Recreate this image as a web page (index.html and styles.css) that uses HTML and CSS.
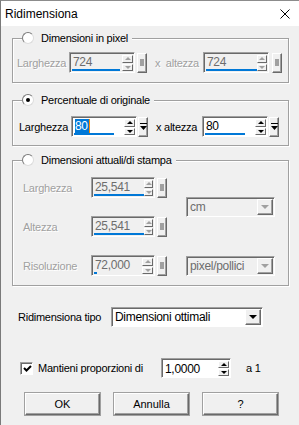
FILE: index.html
```html
<html lang="it">

<head>
    <meta charset="UTF-8">
    <title>Ridimensiona</title>
    <link rel="stylesheet" href="styles.css">
</head>

<body>
    <div class="window">
        <!-- Title bar -->
        <div class="titlebar">
            <span>Ridimensiona</span>
            <svg class="close" width="10" height="10" viewBox="0 0 10 10">
                <path d="M0.5 0.5 L9.5 9.5 M9.5 0.5 L0.5 9.5" stroke="#000" stroke-width="1" fill="none"/>
            </svg>
        </div>

        <div class="content">
            <!-- Dimensioni in pixel -->
            <div class="group g1">
                <div class="legend"><span class="radio"></span><span>Dimensioni in pixel</span></div>
                <div class="row">
                    <span class="lbl off w52">Larghezza</span>
                    <div class="spin off">
                        <div class="field"><span class="val">724</span><i class="bar" style="width:48px"></i></div>
                        <div class="arrows"><span class="ab up"></span><span class="ab down"></span></div>
                    </div>
                    <span class="sqbtn m2"><span class="sq"></span></span>
                    <span class="lbl off x-lbl">x &nbsp;altezza</span>
                    <div class="spin off">
                        <div class="field"><span class="val">724</span><i class="bar" style="width:51px"></i></div>
                        <div class="arrows"><span class="ab up"></span><span class="ab down"></span></div>
                    </div>
                    <span class="sqbtn m3"><span class="sq"></span></span>
                </div>
            </div>

            <!-- Percentuale di originale -->
            <div class="group g2">
                <div class="legend"><span class="radio on"></span><span>Percentuale di originale</span></div>
                <div class="row">
                    <span class="lbl w52">Larghezza</span>
                    <div class="spin white">
                        <div class="field"><span class="val"><span class="sel">80</span><span class="caret"></span></span><i class="bar" style="width:40px"></i></div>
                        <div class="arrows"><span class="ab up"></span><span class="ab down"></span></div>
                    </div>
                    <span class="sqbtn m1">
                        <svg width="7" height="7" viewBox="0 0 7 7"><rect x="0" y="0" width="7" height="1" fill="#000"/><polygon points="0,3 7,3 3.5,7" fill="#000"/></svg>
                    </span>
                    <span class="lbl x-lbl2">x altezza</span>
                    <div class="spin white">
                        <div class="field"><span class="val">80</span><i class="bar" style="width:40px"></i></div>
                        <div class="arrows"><span class="ab up"></span><span class="ab down"></span></div>
                    </div>
                    <span class="sqbtn m1">
                        <svg width="7" height="7" viewBox="0 0 7 7"><rect x="0" y="0" width="7" height="1" fill="#000"/><polygon points="0,3 7,3 3.5,7" fill="#000"/></svg>
                    </span>
                </div>
            </div>

            <!-- Dimensioni attuali/di stampa -->
            <div class="group g3">
                <div class="legend"><span class="radio"></span><span>Dimensioni attuali/di stampa</span></div>
                <div class="grid">
                    <span class="lbl off">Larghezza</span>
                    <div class="pair">
                        <div class="spin off narrow">
                            <div class="field"><span class="val">25,541</span><i class="bar" style="width:50px"></i></div>
                            <div class="arrows"><span class="ab up"></span><span class="ab down"></span></div>
                        </div>
                        <span class="sqbtn m2"><span class="sq"></span></span>
                    </div>
                    <div class="select off unit"><span class="text">cm</span><span class="dbtn"></span></div>

                    <span class="lbl off">Altezza</span>
                    <div class="pair">
                        <div class="spin off narrow">
                            <div class="field"><span class="val">25,541</span><i class="bar" style="width:50px"></i></div>
                            <div class="arrows"><span class="ab up"></span><span class="ab down"></span></div>
                        </div>
                        <span class="sqbtn m2"><span class="sq"></span></span>
                    </div>

                    <span class="lbl off">Risoluzione</span>
                    <div class="pair">
                        <div class="spin off narrow">
                            <div class="field"><span class="val">72,000</span><i class="bar" style="width:3px"></i></div>
                            <div class="arrows"><span class="ab up"></span><span class="ab down"></span></div>
                        </div>
                        <span class="sqbtn m2"><span class="sq"></span></span>
                    </div>
                    <div class="select off res"><span class="text">pixel/pollici</span><span class="dbtn"></span></div>
                </div>
            </div>

            <!-- Ridimensiona tipo -->
            <div class="tipo">
                <span class="lbl tipo-lbl">Ridimensiona tipo</span>
                <div class="select tipo-sel"><span class="text">Dimensioni ottimali</span><span class="dbtn"></span></div>
            </div>

            <!-- Mantieni proporzioni -->
            <div class="keep">
                <span class="check">
                    <svg width="9" height="9" viewBox="0 0 9 9"><path d="M1 4 L3.5 6.5 L8 2" stroke="#000" stroke-width="2" fill="none"/></svg>
                </span>
                <span class="lbl keep-lbl">Mantieni proporzioni di</span>
                <div class="spin white ratio">
                    <div class="field"><span class="val">1,0000</span></div>
                    <div class="arrows"><span class="ab up"></span><span class="ab down"></span></div>
                </div>
                <span class="lbl a1">a 1</span>
            </div>

            <!-- Buttons -->
            <div class="buttons">
                <button class="btn">OK</button>
                <button class="btn">Annulla</button>
                <button class="btn">?</button>
            </div>
        </div>
    </div>
</body>

</html>
```

FILE: styles.css
```css
* {
    box-sizing: border-box;
}

body {
    margin: 0;
    font-family: "Liberation Sans", Arial, sans-serif;
    font-size: 11px;
    letter-spacing: -0.25px;
    color: #000;
    background-color: #f0f0f0;
}

.window {
    width: 299px;
    height: 425px;
    overflow: hidden;
    border-top: 1px solid #8c8c8c;
    border-left: 1px solid #7a7a7a;
    background-color: #f0f0f0;
}

.titlebar {
    height: 25px;
    background-color: #fff;
    display: flex;
    align-items: center;
    justify-content: space-between;
    padding: 0 9px 0 4px;
    font-size: 12px;
    letter-spacing: 0;
}

.content {
    padding: 12px 0 0 11px;
}

/* group boxes */
.group {
    width: 277px;
    border: 1px solid #a0a0a0;
    box-shadow: inset 1px 1px #fff, 1px 1px #fff;
}

.legend {
    display: flex;
    align-items: center;
    gap: 7px;
    width: max-content;
    height: 14px;
    margin: -8px 0 0 9px;
    padding-right: 4px;
    background-color: #f0f0f0;
}

.g1 {
    padding-bottom: 9px;
}

.g1 .row {
    margin-top: 7px;
    padding-left: 4px;
}

.g2 {
    margin-top: 17px;
    padding-bottom: 8px;
}

.g2 .row {
    margin-top: 9px;
    padding-left: 6px;
}

.g3 {
    margin-top: 14px;
    padding-bottom: 9px;
}

.row {
    display: flex;
    align-items: center;
    height: 21px;
}

.lbl {
    white-space: nowrap;
}

.off {
    color: #a0a0a0;
}

.lbl.off {
    text-shadow: 1px 1px 0 #fff;
}

.w52 {
    width: 52px;
}

.x-lbl {
    width: 48px;
    margin-left: 8px;
}

.x-lbl2 {
    width: 46px;
    margin-left: 8px;
}

.m1 {
    margin-left: 1px;
}

.m2 {
    margin-left: 2px;
}

.m3 {
    margin-left: 3px;
}

/* radio + checkbox */
.radio {
    width: 12px;
    height: 12px;
    border-radius: 50%;
    background-color: #fff;
    border: 1px solid;
    border-color: #7a7a7a #dcdcdc #dcdcdc #7a7a7a;
    display: flex;
    align-items: center;
    justify-content: center;
}

.radio.on::before {
    content: "";
    width: 4px;
    height: 4px;
    border-radius: 50%;
    background-color: #000;
}

.check {
    width: 13px;
    height: 13px;
    background-color: #fff;
    border: 1px solid;
    border-color: #a0a0a0 #fff #fff #a0a0a0;
    box-shadow: inset 1px 1px #696969;
    display: flex;
    align-items: center;
    justify-content: center;
    padding: 1px 0 0 1px;
}

/* spin boxes */
.spin {
    display: flex;
    flex-shrink: 0;
    width: 66px;
    height: 21px;
    padding: 2px 1px 1px 2px;
    border: 1px solid;
    border-color: #a0a0a0 #fff #fff #a0a0a0;
    box-shadow: inset 1px 1px #696969;
    background-color: #f0f0f0;
}

.spin.white {
    background-color: #fff;
}

.spin.narrow {
    width: 64px;
}

.field {
    flex: 1;
    display: flex;
    flex-direction: column;
}

.val {
    flex: 1;
    display: flex;
    align-items: center;
    padding-left: 1px;
    font-size: 12px;
    letter-spacing: -0.3px;
}

.spin.off .val {
    color: #6d6d6d;
}

.sel {
    background-color: #0078d7;
    color: #fff;
    line-height: 14px;
    padding-right: 1px;
}

.caret {
    width: 1px;
    height: 14px;
    background-color: #ff8c00;
}

.bar {
    display: block;
    height: 2px;
    background-color: #0078d7;
}

.arrows {
    width: 11px;
    display: flex;
    flex-direction: column;
    justify-content: center;
    gap: 1px;
}

.ab {
    height: 8px;
    display: flex;
    align-items: center;
    justify-content: center;
    background-color: #f0f0f0;
    border: 1px solid;
    border-color: #fff #696969 #696969 #fff;
}

.ab.up::before {
    content: "";
    border-left: 3px solid transparent;
    border-right: 3px solid transparent;
    border-bottom: 3px solid #000;
}

.ab.down::before {
    content: "";
    border-left: 3px solid transparent;
    border-right: 3px solid transparent;
    border-top: 3px solid #000;
}

.spin.off .ab.up::before {
    border-bottom-color: #a0a0a0;
}

.spin.off .ab.down::before {
    border-top-color: #a0a0a0;
}

.sqbtn {
    flex-shrink: 0;
    width: 10px;
    height: 20px;
    display: flex;
    align-items: center;
    justify-content: center;
    background-color: #f0f0f0;
    border: 1px solid;
    border-color: #fff #696969 #696969 #fff;
    box-shadow: inset -1px -1px #a0a0a0;
}

.sq {
    width: 4px;
    height: 7px;
    background-color: #a0a0a0;
}

/* group 3 grid */
.grid {
    display: grid;
    grid-template-columns: 68px 95px 89px;
    grid-template-rows: 21px 21px 21px;
    row-gap: 18px;
    margin-top: 10px;
    padding-left: 10px;
    align-items: center;
}

.pair {
    display: flex;
    align-items: center;
}

.unit {
    grid-column: 3;
    grid-row: 1 / 3;
}

.res {
    grid-column: 3;
    grid-row: 3;
    align-self: end;
}

/* drop-downs */
.select {
    display: flex;
    height: 20px;
    padding: 1px;
    border: 1px solid;
    border-color: #a0a0a0 #fff #fff #a0a0a0;
    box-shadow: inset 1px 1px #696969;
    background-color: #fff;
}

.select.off {
    background-color: #f0f0f0;
    color: #6d6d6d;
}

.select .text {
    flex: 1;
    display: flex;
    align-items: center;
    padding-left: 2px;
    font-size: 12px;
    letter-spacing: -0.3px;
}

.dbtn {
    width: 16px;
    display: flex;
    align-items: center;
    justify-content: center;
    background-color: #f0f0f0;
    border: 1px solid;
    border-color: #fff #696969 #696969 #fff;
    box-shadow: inset -1px -1px #a0a0a0;
}

.dbtn::before {
    content: "";
    border-left: 4px solid transparent;
    border-right: 4px solid transparent;
    border-top: 4px solid #000;
}

.select.off .dbtn::before {
    border-top-color: #a0a0a0;
}

.tipo {
    display: flex;
    align-items: center;
    margin-top: 21px;
    padding-left: 6px;
}

.tipo-lbl {
    width: 93px;
}

.tipo-sel {
    width: 152px;
}

.keep {
    display: flex;
    align-items: center;
    height: 20px;
    margin-top: 31px;
    padding-left: 8px;
}

.keep-lbl {
    width: 123px;
    margin-left: 5px;
}

.ratio {
    width: 70px;
    height: 20px;
}

.a1 {
    margin-left: 15px;
}

.buttons {
    display: flex;
    gap: 14px;
    margin-top: 15px;
    padding-left: 13px;
}

.btn {
    width: 75px;
    height: 22px;
    padding: 0;
    font-family: "Liberation Sans", Arial, sans-serif;
    font-size: 11px;
    color: #000;
    background-color: #f0f0f0;
    border: 1px solid;
    border-color: #fff #696969 #696969 #fff;
    box-shadow: inset -1px -1px #a0a0a0;
    outline: 1px solid #a0a0a0;
}
```
